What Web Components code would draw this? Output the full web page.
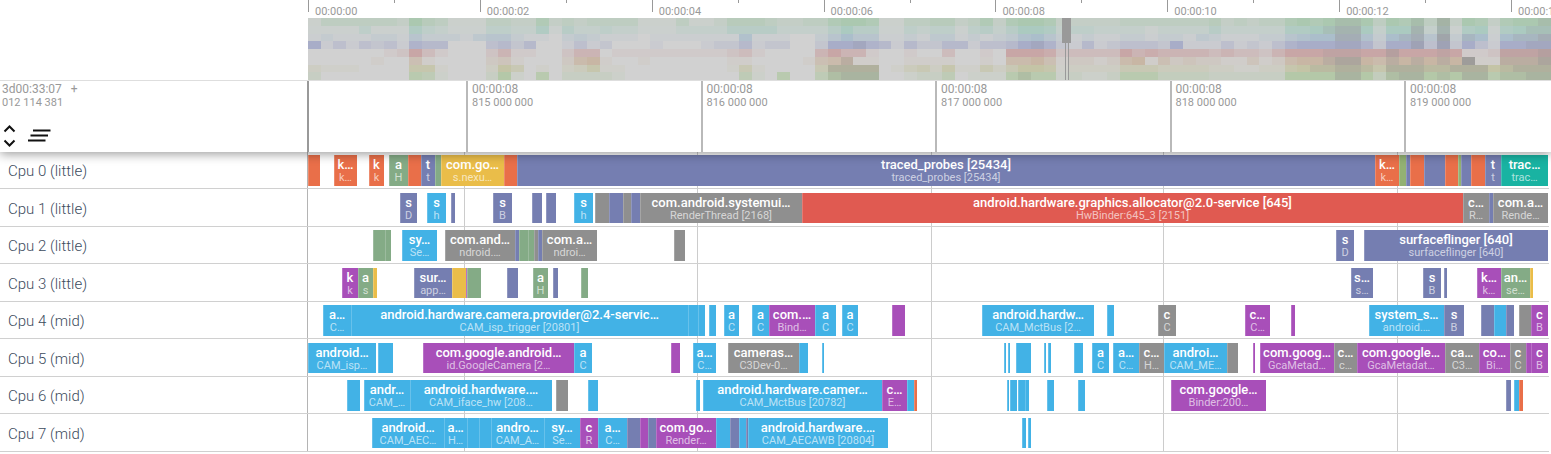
<!DOCTYPE html>
<html lang="en">
<head>
<meta charset="utf-8">
<title>Trace viewer</title>
<style>
  body { margin: 0; background: #fff; font-family: Roboto, "Liberation Sans", sans-serif; }
</style>
</head>
<body>
<trace-viewer></trace-viewer>

<script>
const SHELL = '308px';

/* Element whose shadow root is filled from its render() markup */
class Base extends HTMLElement {
  connectedCallback() {
    if (this.shadowRoot) return;
    const t = document.createElement('template');
    t.innerHTML = this.render();
    this.attachShadow({ mode: 'open' }).appendChild(t.content.cloneNode(true));
  }
}

/* ---- Overview: whole-trace ruler and CPU load heat map ---- */
const LOAD = [
  '1333333264' + '3111332252' + '3233331113' + '1124443223' + '3566511334' + '4235256652' + '2222333333' + '3423233565' + '6776365738' + '26525667',
  '1111311153' + '2111332251' + '4223221112' + '2224444222' + '2464411323' + '3134246652' + '3322221222' + '2422222556' + '7886266828' + '15615677',
  '1211122142' + '2213442110' + '2321110111' + '1111511100' + '2464411213' + '3121235642' + '1211221221' + '3211122456' + '6885267849' + '27616778',
  '6131323154' + '4000342400' + '1312000100' + '0122412200' + '2667541422' + '4413346752' + '1412333261' + '1131213566' + '6775266838' + '26316677',
  '0000001263' + '1000241100' + '2440111111' + '1112310000' + '4644100100' + '3001066652' + '3333645444' + '4343324666' + '7776686667' + '61127778',
  '0000010041' + '0000231000' + '2561001000' + '0001100001' + '4571100111' + '1001055641' + '2212561423' + '2211312566' + '7886576767' + '69117778',
  '2111000055' + '1000264010' + '2351100000' + '0001410000' + '4888801342' + '5114246651' + '2222444333' + '3221122567' + '7887588877' + '88867888',
  '2000000054' + '1000261050' + '2222100000' + '0000410500' + '4788800122' + '4011157551' + '2112555333' + '3222222666' + '6886378867' + '68857788'
];
const IDLE = [209, 209, 209];
const BUSY = [[171,200,176],[171,202,192],[171,190,203],[168,173,200],[200,166,166],[200,182,164],[196,196,166],[180,200,168]];
const FULL = [[160,168,160],[160,168,166],[160,165,170],[154,156,172],[172,156,156],[158,156,154],[166,166,152],[164,170,156]];
const mix = (a, b, t) => 'rgb(' + a.map((v, i) => Math.round(v + (b[i] - v) * t)).join(',') + ')';
const loadColor = (row, n) => n <= 6 ? mix(IDLE, BUSY[row], n / 6) : mix(BUSY[row], FULL[row], (n - 6) / 3);

customElements.define('load-map', class extends Base {
  render() {
    return `<style>
      :host { display: grid; grid-template-columns: repeat(98, 1fr); grid-auto-rows: 1fr; height: 62px; background: #d1d1d1; }
    </style>` + LOAD.map((line, r) => [...line].map(n =>
      `<i style="background:${loadColor(r, +n)}"></i>`).join('')).join('');
  }
});

customElements.define('overview-panel', class extends Base {
  render() {
    const labels = ['00:00:00','00:00:02','00:00:04','00:00:06','00:00:08','00:00:10','00:00:12'];
    return `<style>
      :host { display: block; padding-left: ${SHELL}; border-bottom: 1px solid #dedede; overflow: hidden; }
      .ruler { display: flex; height: 18px; font-size: 11px; line-height: 13px; color: #999; }
      .major { flex: 172 0 0; min-width: 0; display: flex; white-space: nowrap; }
      .major:last-child { flex-grow: 40; }
      .tick { flex: 1 0 0; min-width: 0; display: flex; }
      .tick::before { content: ""; width: 1px; height: 12px; background: #999; flex: none; }
      .minor::before { height: 3px; }
      .tick span { padding: 5px 0 0 6px; }
      .map { position: relative; }
      .brush { position: absolute; top: 0; bottom: -1px; left: 61%; width: 4px; border: solid #999; border-width: 0 1px; box-sizing: border-box; margin-left: -1px; }
      .brush::before { content: ""; position: absolute; left: -4px; top: 0; width: 9px; height: 25px; background: #999; }
    </style>
    <div class="ruler">${labels.map(l =>
      `<div class="major"><div class="tick"><span>${l}</span></div><div class="tick minor"></div></div>`).join('')}
      <div class="major"><div class="tick"><span>00:00:1</span></div></div></div>
    <div class="map"><load-map></load-map><div class="brush"></div></div>`;
  }
});

/* ---- Time axis of the visible window ---- */
customElements.define('time-axis', class extends Base {
  render() {
    return `<style>
      :host { display: flex; height: 71px; position: relative; z-index: 1; background: #fff;
        box-shadow: 0 2px 10px rgba(0,0,0,.4); clip-path: inset(0 0 -16px 0);
        font-size: 12px; line-height: 13px; color: #999; }
      .shell { width: ${SHELL}; flex: none; box-sizing: border-box; border-right: 1px solid #999;
        display: flex; flex-direction: column; justify-content: space-between; padding: 2px 0 2px 2px; }
      .tools { display: flex; align-items: center; gap: 5px; margin-left: -4px; }
      button { border: 0; padding: 0; background: none; display: block; line-height: 0; }
      .origin { white-space: pre; }
      .small { font-size: 11px; }
      .marks { flex: 1; min-width: 0; display: grid; overflow: hidden; border-left: 1px solid #999;
        grid-template-columns: minmax(0, 314fr) repeat(4, minmax(0, 469fr)) minmax(0, 294fr); }
      .mark { white-space: nowrap; border-left: 2px solid #b9b9b9; padding: 2px 0 0 4px; }
    </style>
    <div class="shell">
      <div><div class="origin">3d00:33:07   +</div><div class="small">012 114 381</div></div>
      <div class="tools">
        <button aria-label="Expand all"><svg width="23" height="30" viewBox="0 0 23 30" fill="none" stroke="#111" stroke-width="2"><path d="M6.500 11.500 11.500 6.500 16.500 11.500M6.500 20.500 11.500 25.500 16.500 20.500"/></svg></button>
        <button aria-label="Clear all pinned tracks"><svg width="26" height="30" viewBox="0 0 26 30" fill="none" stroke="#111" stroke-width="2"><path d="M7 10.500h17.500M4.500 15.500h17.500M2 20.500h17.500"/></svg></button>
      </div>
    </div>
    <div class="marks"><div></div>${[815,816,817,818,819].map(n =>
      `<div class="mark"><div>00:00:08</div><div class="small">${n} 000 000</div></div>`).join('')}</div>`;
  }
});

/* ---- One scheduling slice ---- */
customElements.define('sched-slice', class extends Base {
  render() {
    return `<style>
      :host { display: block; min-width: 0; overflow: hidden; text-align: center; white-space: nowrap; color: #fff;
        box-sizing: border-box; background: var(--c); box-shadow: inset 1px 0 rgba(255,255,255,.2); padding-top: 2px; }
      div { display: flex; justify-content: center; }
      .name { font-size: 13px; line-height: 15px; font-weight: 500; }
      .thread { font-size: 11px; line-height: 12px; color: rgba(255,255,255,.65); }
    </style><div class="name"><slot></slot></div><div class="thread"><slot name="thread"></slot></div>`;
  }
});

/* ---- One CPU track: label shell and lane of slices ---- */
const GRID = [156, 389, 623, 855, 1089].map(x => {
  const p = (x / 1241 * 100).toFixed(2) + '%';
  return `transparent ${p}, #ccc ${p}, #ccc calc(${p} + 1px), transparent calc(${p} + 1px)`;
}).join(', ');

customElements.define('cpu-track', class extends Base {
  render() {
    return `<style>
      :host { display: flex; box-sizing: border-box; height: 38px; margin-right: 2px; border-bottom: 1px solid #d0d0d0; }
      :host(:nth-child(odd)) { height: 37px; }
      .shell { width: ${SHELL}; flex: none; box-sizing: border-box; border-right: 1px solid #b4b4b4;
        padding: 2px 0 0 8px; display: flex; align-items: center; font-size: 15px; font-weight: 300; color: #3c4b5d; }
      .lane { flex: 1; min-width: 0; display: flex; padding: 4px 0 3px; background: linear-gradient(to right, ${GRID}); }
      :host(:nth-child(odd)) .lane { padding: 3px 0 2px; }
    </style><div class="shell"><slot name="label"></slot></div><div class="lane"><slot></slot></div>`;
  }
});

/* Palette of processes */
const COLORS = { o: '#e96f49', v: '#757eb1', g: '#84ab86', y: '#eabd49', b: '#42b2e6', s: '#8f8f8f',
  p: '#a84fb9', r: '#e05a51', t: '#19b3a2', l: '#93b173' };

/* start, end, colour, process, thread */
const TRACKS = [
  ['Cpu 0 (little)', `308 320 o|334 357 o k… k…|369 384 o k k|389 408 g a H|408 421 o|421 435 v t t|435 441 g|441 504 y com.go… s.nexu…|504 517 o|517 1375 v traced_probes_[25434] traced_probes_[25434]|1375 1399 o k… k…|1399 1406 l|1406 1410 v|1410 1424 o|1424 1445 v|1445 1458 o|1458 1461 l|1461 1471 v|1471 1485 o|1485 1501 v t t|1501 1548 t trac… trac…`],
  ['Cpu 1 (little)', `400 417 v s D|427 446 b s h|451 455 v|493 512 v s B|532 542 v|546 556 v|574 593 b s h|595 609 s|609 623 v|623 631 s|631 640 v|640 802 s com.android.systemui… RenderThread_[2168]|802 1463 r android.hardware.graphics.allocator@2.0-service_[645] HwBinder:645_3_[2151]|1463 1489 s c… R…|1489 1493 v|1493 1548 s com.a… Rende…`],
  ['Cpu 2 (little)', `373 385 g|385 391 g|402 437 b sy… Se…|445 515 s com.and… ndroid.…|515 519 v|519 528 g|528 534 g|534 538 s|538 542 v|542 597 s com.a… ndroi…|674 685 s|1336 1354 v s D|1364 1548 v surfaceflinger_[640] surfaceflinger_[640]`],
  ['Cpu 3 (little)', `342 358 p k k|358 373 g a s|373 377 y|414 452 v sur… app…|452 466 y|466 467 p|467 481 g|507 518 v|533 548 g a H|553 558 v|581 588 g|1351 1373 v s… s…|1423 1441 v s B|1444 1447 v|1477 1501 p k… k…|1501 1530 g an… se…|1530 1533 y`],
  ['Cpu 4 (mid)', `323 351 b a… C…|351 688 b android.hardware.camera.provider@2.4-servic… CAM_isp_trigger_[20801]|688 698 b|698 705 b|709 716 b|724 739 b a C|752 769 b a C|769 815 p com.… Bind…|815 836 b a C|842 858 b a C|892 905 p|982 1094 b android.hardw… CAM_MctBus_[2…|1107 1114 b|1158 1176 s c C|1245 1270 p c… C…|1291 1295 p|1369 1444 b system_s… android.…|1444 1464 v s B|1481 1494 v|1494 1506 b|1506 1514 v|1519 1531 s|1531 1548 p c B`],
  ['Cpu 5 (mid)', `308 376 b android… CAM_isp…|378 393 b|423 574 p com.google.android… id.GoogleCamera_[2…|574 592 b a C|671 680 p|693 716 b a… C…|728 799 s cameras… C3Dev-0…|799 808 b|822 824 b|1004 1006 b|1008 1010 b|1016 1031 b|1044 1046 b|1048 1051 b|1074 1083 b|1092 1109 b a C|1113 1139 b a… C…|1139 1164 s c… H…|1164 1227 b androi… CAM_ME…|1227 1238 s|1253 1255 p|1260 1334 p com.goog… GcaMetad…|1334 1357 s c… c…|1357 1445 p com.google… GcaMetadat…|1445 1479 s ca… C3…|1479 1510 p co… Bi…|1510 1526 s c C|1526 1531 p|1531 1548 p c B`],
  ['Cpu 6 (mid)', `347 360 b|364 410 b andr… CAM_…|410 552 b android.hardware.… CAM_iface_hw_[208…|556 568 s|588 598 b|696 700 b|703 882 b android.hardware.camer… CAM_MctBus_[20782]|882 907 p c… E…|907 914 b|914 917 o|1007 1009 b|1010 1017 b|1018 1025 b|1025 1029 b|1047 1054 b|1078 1085 b|1171 1266 p com.google… Binder:200…|1506 1511 v|1514 1519 b|1519 1523 o`],
  ['Cpu 7 (mid)', `372 444 b android… CAM_AEC…|444 467 b a… H…|467 479 b|479 491 b|491 544 b andro… CAM_A…|544 580 b sy… Se…|580 598 p c R|598 627 b a… C…|627 640 v|640 648 p|648 656 v|656 716 p com.go… Render…|716 730 b|730 739 v|739 746 b|746 748 v|748 888 b android.hardware.… CAM_AECAWB_[20804]|1022 1026 b|1028 1031 b`]
];
/* A "_[" in the data stands for a space before the pid */
const text = s => (s || '').replace('_[', ' [');

customElements.define('trace-viewer', class extends Base {
  render() {
    const lane = data => {
      let at = 308, out = '';
      for (const item of data.split('|')) {
        const [s, e, c, name, thread] = item.split(' ');
        if (+s > at) out += `<i style="flex:${s - at} 0 0"></i>`;
        out += `<sched-slice style="flex:${e - s} 0 0;--c:${COLORS[c]}">${
          name ? text(name) + `<span slot="thread">${text(thread)}</span>` : ''}</sched-slice>`;
        at = +e;
      }
      return out + `<i style="flex:${1549 - at} 0 0"></i>`;
    };
    return `<style>:host { display: block; overflow: hidden; }</style>
      <overview-panel></overview-panel>
      <time-axis></time-axis>
      <main>${TRACKS.map(([label, data]) =>
        `<cpu-track><span slot="label">${label}</span>${lane(data)}</cpu-track>`).join('')}</main>`;
  }
});
</script>
</body>
</html>
